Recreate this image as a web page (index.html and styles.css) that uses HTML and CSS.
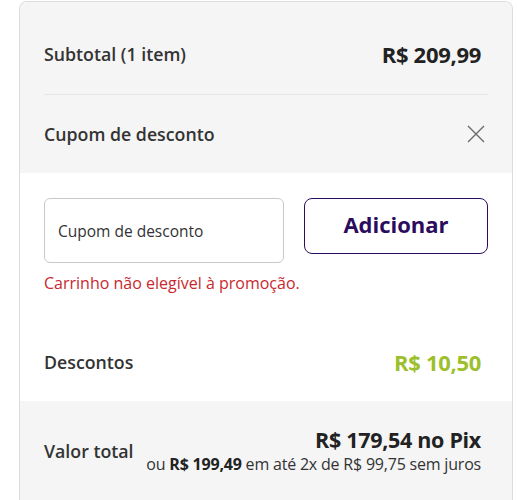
FILE: index.html
```html
<!DOCTYPE html>
<html lang="pt-BR">
<head>
  <meta charset="UTF-8" />
  <title>Resumo do pedido</title>
  <meta name="viewport" content="width=device-width, initial-scale=1.0"/>
  <link rel="stylesheet" href="styles.css">
</head>
<body>

  <div class="card">
    <!-- subtotal + cupom header -->
    <div class="section grey">
      <div class="row subtotal">
        <span class="label">Subtotal (1 item)</span>
        <span class="price">R$ 209,99</span>
      </div>
      <div class="row coupon-head">
        <span class="label">Cupom de desconto</span>
        <svg class="close" width="18" height="18" viewBox="0 0 18 18">
          <path d="M1 1 L17 17 M17 1 L1 17" stroke="#6b6b6b" stroke-width="1.4" fill="none"/>
        </svg>
      </div>
    </div>

    <!-- cupom form -->
    <div class="section white">
      <div class="coupon-form">
        <div class="coupon-input">Cupom de desconto</div>
        <button class="btn-add">Adicionar</button>
      </div>
      <p class="error">Carrinho não elegível à promoção.</p>

      <div class="row discounts">
        <span class="label">Descontos</span>
        <span class="price green">R$ 10,50</span>
      </div>
    </div>

    <!-- total -->
    <div class="section grey">
      <div class="row total">
        <span class="label">Valor total</span>
        <div class="total-values">
          <div class="pix">R$ 179,54 no Pix</div>
          <div class="installments">ou <b>R$ 199,49</b> em até 2x de R$ 99,75 sem juros</div>
        </div>
      </div>
    </div>
  </div>

</body>
</html>
```

FILE: styles.css
```css
body, html {
  margin: 0;
  padding: 0;
  font-family: "Open Sans", "Noto Sans", Arial, sans-serif;
  background: #fff;
  color: #333;
}

.card {
  width: 492px;
  margin: 1px 0 0 19px;
  border: 1px solid #dcdcdc;
  border-bottom: none;
  border-radius: 8px 8px 0 0;
  overflow: hidden;
}

.section {
  padding: 0 24px;
}

.grey {
  background-color: #f5f5f5;
}

.white {
  background-color: #fff;
}

.row {
  display: flex;
  justify-content: space-between;
  align-items: center;
  padding-right: 7px;
}

.label {
  font-size: 17.75px;
  font-weight: 600;
  line-height: 24px;
  color: #333;
}

.price {
  font-size: 22px;
  font-weight: 700;
  line-height: 24px;
  color: #222;
  letter-spacing: -0.3px;
}

.price.green {
  color: #9dbf2c;
}

.subtotal {
  padding-top: 40px;
  padding-bottom: 28px;
  border-bottom: 1px solid #e6e6e6;
}

.coupon-head {
  padding-top: 27px;
  padding-bottom: 27px;
  padding-right: 3px;
}

.close {
  display: block;
}

.coupon-form {
  display: flex;
  align-items: flex-start;
  gap: 20px;
  padding-top: 25px;
}

.coupon-input {
  box-sizing: border-box;
  width: 240px;
  height: 65px;
  padding-left: 13px;
  border: 1px solid #c9c9c9;
  border-radius: 6px;
  background: #fff;
  font-size: 15.5px;
  color: #333;
  display: flex;
  align-items: center;
}

.btn-add {
  flex: 1;
  height: 56px;
  border: 1.5px solid #2b0c5e;
  border-radius: 8px;
  background: #fff;
  font-family: inherit;
  font-size: 22px;
  font-weight: 700;
  color: #2b0c5e;
  padding: 0 0 4px;
}

.error {
  margin: 8px 0 0;
  font-size: 16px;
  line-height: 24px;
  color: #c8282e;
}

.discounts {
  padding-top: 55px;
  padding-bottom: 27px;
}

.total {
  padding-top: 26px;
  padding-bottom: 30px;
}

.total-values {
  text-align: right;
}

.pix {
  font-size: 21.5px;
  font-weight: 700;
  line-height: 26px;
  color: #222;
  letter-spacing: -0.3px;
}

.installments {
  font-size: 16px;
  line-height: 22px;
  color: #333;
  letter-spacing: -0.2px;
}

.installments b {
  font-weight: 700;
  color: #222;
}
```
